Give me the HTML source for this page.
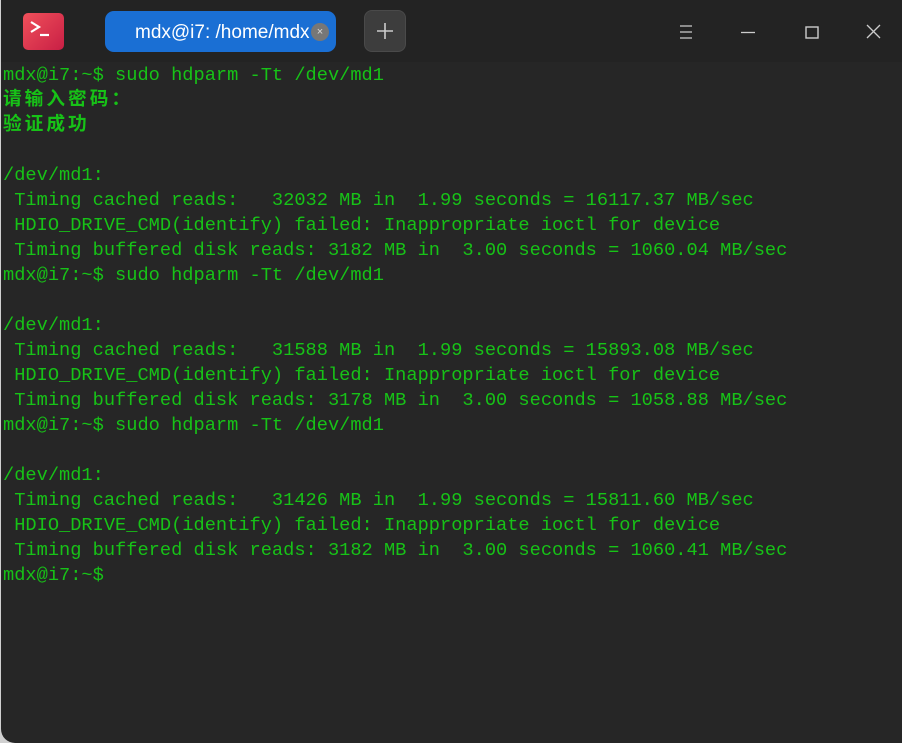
<!DOCTYPE html>
<html><head><meta charset="utf-8"><style>
html,body{margin:0;padding:0;width:902px;height:743px;overflow:hidden;background:#d0d0d0;}
.win{position:absolute;left:1px;top:0;width:901px;height:743px;background:#262626;border-radius:0 0 0 14px;overflow:hidden;}
.title{position:absolute;left:0;top:0;width:901px;height:62px;background:#232323;}
.logo{position:absolute;left:22px;top:13px;width:41px;height:37px;border-radius:5px;background:linear-gradient(135deg,#f0505a,#c81f45);color:#fff;font:bold 16px "Liberation Mono",monospace;}
.tab{position:absolute;left:104px;top:11px;width:231px;height:41px;border-radius:9px;background:#1a6fd4;color:#fff;font:19px "Liberation Sans",sans-serif;line-height:43px;}
.tab span{position:absolute;left:30px;}
.x{position:absolute;left:206px;top:12px;width:18px;height:18px;border-radius:9px;background:#777;color:#ddd;font:11px "Liberation Sans",sans-serif;line-height:18px;text-align:center;}
.plus{position:absolute;left:363px;top:10px;width:42px;height:42px;border-radius:8px;background:#3d3d3d;border:1px solid #4a4a4a;box-sizing:border-box;}
pre{position:absolute;left:2px;top:63px;margin:0;font:18.68px "Liberation Mono","Noto Sans CJK SC",monospace;line-height:25px;color:#17c217;white-space:pre;}
b{font-weight:bold;letter-spacing:3px;}
</style></head><body>
<div class="win">
<div class="title">
<div class="logo"><svg width="41" height="37"><path d="M8 9l8 5-8 5" stroke="#fff" stroke-width="2.2" fill="none"/><path d="M17 22h9" stroke="#fff" stroke-width="2.2"/></svg></div>
<div class="tab"><span>mdx@i7: /home/mdx</span><div class="x">×</div></div>
<div class="plus"><svg width="40" height="40"><path d="M20 12v16M12 20h16" stroke="#ccc" stroke-width="1.6"/></svg></div>
<svg style="position:absolute;left:670px;top:20px" width="220" height="24">
<path d="M9 6h12M9 12h12M9 18h12" stroke="#ccc" stroke-width="1.3"/>
<path d="M70 12.5h14" stroke="#ccc" stroke-width="1.3"/>
<rect x="135" y="7" width="12" height="11" stroke="#ccc" stroke-width="1.4" fill="none"/>
<path d="M196 5l13 13M209 5l-13 13" stroke="#ccc" stroke-width="1.3"/>
</svg>
</div>
<pre>mdx@i7:~$ sudo hdparm -Tt /dev/md1
<b>请输入密码：</b>
<b>验证成功</b>

/dev/md1:
 Timing cached reads:   32032 MB in  1.99 seconds = 16117.37 MB/sec
 HDIO_DRIVE_CMD(identify) failed: Inappropriate ioctl for device
 Timing buffered disk reads: 3182 MB in  3.00 seconds = 1060.04 MB/sec
mdx@i7:~$ sudo hdparm -Tt /dev/md1

/dev/md1:
 Timing cached reads:   31588 MB in  1.99 seconds = 15893.08 MB/sec
 HDIO_DRIVE_CMD(identify) failed: Inappropriate ioctl for device
 Timing buffered disk reads: 3178 MB in  3.00 seconds = 1058.88 MB/sec
mdx@i7:~$ sudo hdparm -Tt /dev/md1

/dev/md1:
 Timing cached reads:   31426 MB in  1.99 seconds = 15811.60 MB/sec
 HDIO_DRIVE_CMD(identify) failed: Inappropriate ioctl for device
 Timing buffered disk reads: 3182 MB in  3.00 seconds = 1060.41 MB/sec
mdx@i7:~$</pre>
</div>
</body></html>
